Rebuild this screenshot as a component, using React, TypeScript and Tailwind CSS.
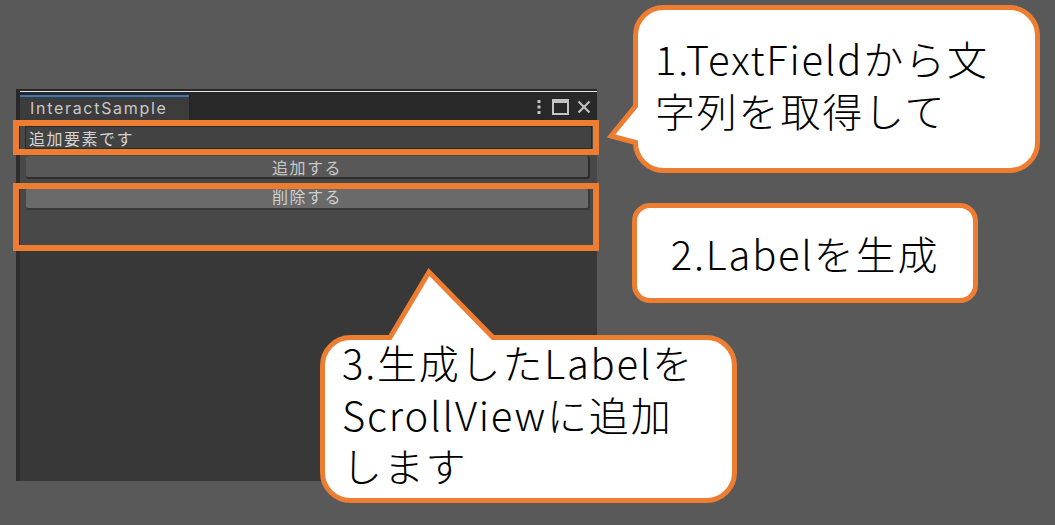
import React from "react";

const jp = { fontFamily: '"Noto Sans CJK JP", "Noto Sans", sans-serif' };
const ui = { fontFamily: 'Inter, "Noto Sans CJK JP", sans-serif' };

function TitleIcons() {
  return (
    <div className="flex items-center pr-[6px] pt-[4px] self-start">
      <svg width="12" height="16" viewBox="0 0 12 16" className="mr-[6px]">
        <rect x="4.5" y="1" width="3" height="3" fill="#c4c4c4" />
        <rect x="4.5" y="6.5" width="3" height="3" fill="#c4c4c4" />
        <rect x="4.5" y="12" width="3" height="3" fill="#c4c4c4" />
      </svg>
      <svg width="18" height="16" viewBox="0 0 18 16" className="mr-[8px]">
        <rect x="2" y="1" width="15" height="14" fill="none" stroke="#c4c4c4" strokeWidth="2" />
        <rect x="2" y="1" width="15" height="3" fill="#c4c4c4" />
      </svg>
      <svg width="14" height="16" viewBox="0 0 14 16">
        <path d="M1.5 2.5 L12.5 13.5 M12.5 2.5 L1.5 13.5" stroke="#c4c4c4" strokeWidth="2" />
      </svg>
    </div>
  );
}

function UnityWindow() {
  return (
    <div className="w-[581px] h-[392px] flex flex-col bg-[#383838]">
      <div className="h-[31px] bg-[#282828] flex flex-col pl-[4px]">
        <div className="h-px bg-[#e8e8e8] mt-[2px]" />
        <div className="flex flex-1 items-end justify-between mt-[3px]">
          <div
            className="w-[169px] h-[25px] bg-[#3c3c3c] border-t-[2px] border-[#3a79bb] pl-[10px] text-[16px] leading-[22px] tracking-[1.7px] text-[#c8c8c8]"
            style={ui}
          >
            InteractSample
          </div>
          <TitleIcons />
        </div>
      </div>
      <div className="flex flex-1">
        <div className="w-[4px] bg-[#2d2d2d]" />
        <div className="flex flex-col flex-1">
          <div className="h-[131px] bg-[#484848] flex flex-col pt-[6px] pl-[5px] pr-[5px]">
            <div
              className="h-[23px] bg-[#424242] border border-[#2a2a2a] flex items-center pl-[3px] text-[16px] tracking-[1.5px] text-[#d4d4d4]"
              style={jp}
            >
              追加要素です
            </div>
            <div
              className="mt-[7px] ml-[1px] mr-[2px] h-[23px] bg-[#585858] border-b-2 border-r-2 border-[#2c2c2c] rounded-[3px] flex items-center justify-center text-[16px] leading-[20px] tracking-[1.5px] text-[#c8c8c8]"
              style={jp}
            >
              追加する
            </div>
            <div
              className="mt-[9px] ml-[1px] mr-[2px] h-[22px] bg-[#6a6a6a] border-b-2 border-r-2 border-[#383838] rounded-[3px] flex items-start justify-center text-[16px] leading-[17px] tracking-[1.5px] text-[#cfcfcf]"
              style={jp}
            >
              削除する
            </div>
          </div>
          <div className="flex-1 bg-[#383838]" />
        </div>
      </div>
    </div>
  );
}

export default function App() {
  const r = 28;
  const p1 = `M ${635.5 + r} 7.5 H ${1037.5 - r} A ${r} ${r} 0 0 1 1037.5 ${7.5 + r} V ${170.5 - r} A ${r} ${r} 0 0 1 ${1037.5 - r} 170.5 H ${635.5 + r} A ${r} ${r} 0 0 1 635.5 ${170.5 - r} L 611 136 L 635.5 106 V ${7.5 + r} A ${r} ${r} 0 0 1 ${635.5 + r} 7.5 Z`;
  const p3 = `M ${322.5 + r} 337.5 H 390 L 429 272 L 493 337.5 H ${734.5 - r} A ${r} ${r} 0 0 1 734.5 ${337.5 + r} V ${500.5 - r} A ${r} ${r} 0 0 1 ${734.5 - r} 500.5 H ${322.5 + r} A ${r} ${r} 0 0 1 322.5 ${500.5 - r} V ${337.5 + r} A ${r} ${r} 0 0 1 ${322.5 + r} 337.5 Z`;
  return (
    <div className="relative w-[1055px] h-[525px] bg-[#595959] overflow-hidden">
      <div className="pt-[89px] pl-[16px]">
        <UnityWindow />
      </div>

      {/* annotation boxes */}
      <div className="absolute left-[13px] top-[120px] w-[586px] h-[35px] border-[6px] border-[#ed7d31]" />
      <div className="absolute left-[13px] top-[183px] w-[586px] h-[68px] border-[6px] border-[#ed7d31]" />

      {/* callout shapes */}
      <svg className="absolute left-0 top-0" width="1055" height="525" viewBox="0 0 1055 525">
        <path d={p1} fill="#ffffff" stroke="#ed7d31" strokeWidth="5" strokeLinejoin="miter" />
        <path d={p3} fill="#ffffff" stroke="#ed7d31" strokeWidth="5" strokeLinejoin="miter" />
      </svg>

      <div
        className="absolute left-[655px] top-[32px] text-[40px] font-light leading-[52px] tracking-[1.8px] text-black whitespace-nowrap"
        style={jp}
      >
        <div>1.TextFieldから文</div>
        <div>字列を取得して</div>
      </div>

      <div
        className="absolute left-[632px] top-[203px] w-[346px] h-[100px] bg-white border-[5px] border-[#ed7d31] rounded-[18px] flex items-center justify-center text-[40px] font-light leading-[52px] tracking-[1.8px] text-black whitespace-nowrap"
        style={jp}
      >
        2.Labelを生成
      </div>

      <div
        className="absolute left-[342px] top-[337px] text-[40px] font-light leading-[51.5px] tracking-[1.8px] text-black whitespace-nowrap"
        style={jp}
      >
        <div>3.生成したLabelを</div>
        <div>ScrollViewに追加</div>
        <div>します</div>
      </div>
    </div>
  );
}
